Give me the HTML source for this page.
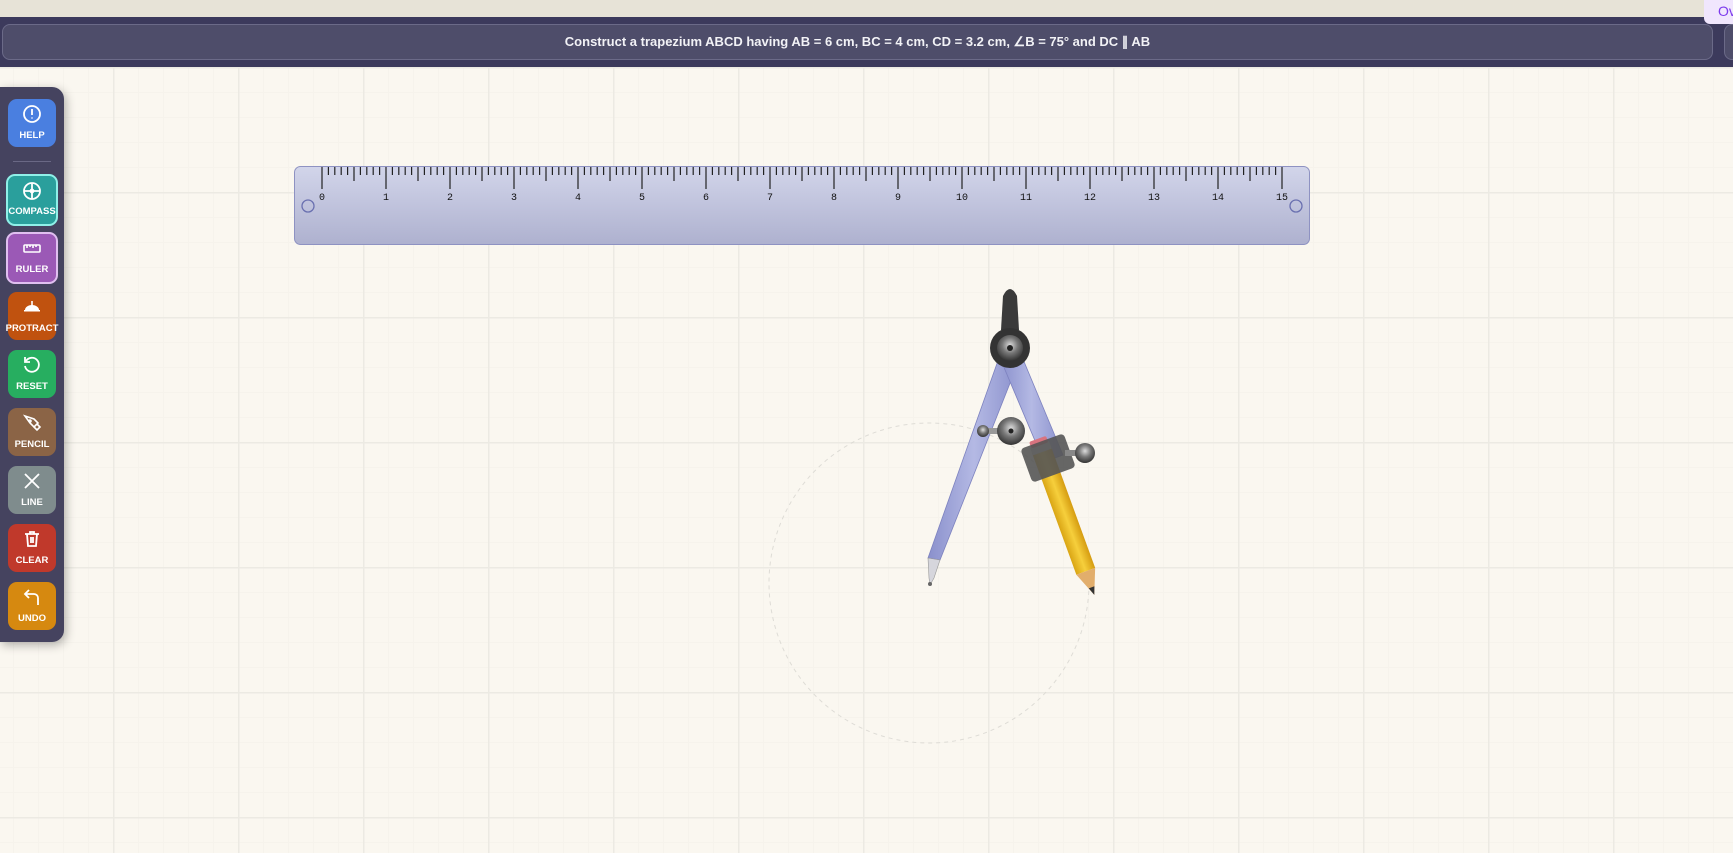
<!DOCTYPE html>
<html><head><meta charset="utf-8"><style>
*{margin:0;padding:0;box-sizing:border-box}
body{width:1733px;height:853px;overflow:hidden;font-family:"Liberation Sans",sans-serif;background:#faf7f0;position:relative}
.top{position:absolute;left:0;top:0;width:1733px;height:17px;background:#e7e3d7}
.badge{position:absolute;left:1704px;top:0;width:40px;height:24px;background:#f0e6fd;border-radius:0 0 0 6px;color:#7c3aed;font-size:14px;padding:3px 0 0 14px}
.bar{position:absolute;left:0;top:17px;width:1733px;height:50px;background:#3c3a5c}
.prompt{position:absolute;left:2px;top:24px;width:1711px;height:36px;background:#4e4d6a;border:1px solid #6b6a88;border-radius:8px;color:#f2f2f6;font-weight:bold;font-size:13px;text-align:center;line-height:34px}
.prompt2{position:absolute;left:1724px;top:24px;width:30px;height:36px;background:#4e4d6a;border:1px solid #6b6a88;border-radius:8px}
.canvas{position:absolute;left:0;top:67px;width:1733px;height:786px;
background-image:linear-gradient(#eceae3 1.5px,transparent 1.5px),linear-gradient(90deg,#eceae3 1.5px,transparent 1.5px),linear-gradient(#f6f3ec 1px,transparent 1px),linear-gradient(90deg,#f6f3ec 1px,transparent 1px);
background-size:125px 125px,125px 125px,25px 25px,25px 25px;background-position:113px 0,113px 0,13px 0,13px 0}
.side{position:absolute;left:0;top:87px;width:64px;height:555px;background:#45435f;border-radius:0 12px 12px 0;box-shadow:2px 3px 10px rgba(0,0,0,.3)}
.btn{position:absolute;left:8px;width:48px;height:48px;border-radius:9px;color:#fff;font-weight:bold;font-size:9.5px;text-align:center}
.btn svg{position:absolute;left:14px;top:5px}
.btn span{position:absolute;left:-6px;right:-6px;top:31px}
.sep{position:absolute;left:13px;top:74px;width:38px;height:1px;background:#6a6885}
</style></head><body>
<div class="top"></div>
<div class="bar"></div>
<div class="badge">Ov</div>
<div class="prompt">Construct a trapezium ABCD having AB = 6 cm, BC = 4 cm, CD = 3.2 cm, ∠B = 75° and DC ∥ AB</div>
<div class="prompt2"></div>
<div class="canvas"></div>
<div class="side">
<div class="btn" style="top:12px;background:#4a7fe0"><svg width="20" height="20" viewBox="0 0 20 20" fill="none" stroke="#fff" stroke-width="1.8"><circle cx="10" cy="10" r="8"/><path d="M10 5v6M10 13.5v1"/></svg><span>HELP</span></div>
<div class="sep"></div>
<div class="btn" style="top:87px;left:6px;width:52px;height:52px;background:#2a9f9c;border:2px solid #8ff0e8"><svg width="20" height="20" viewBox="0 0 20 20" fill="none" stroke="#fff" stroke-width="1.8" style="left:14px"><circle cx="10" cy="10" r="8"/><path d="M10 2v16M2 10h16"/><circle cx="10" cy="10" r="1.5" fill="#fff"/></svg><span style="top:30px">COMPASS</span></div>
<div class="btn" style="top:145px;left:6px;width:52px;height:52px;background:#9b59b6;border:2px solid #e0bff0"><svg width="20" height="20" viewBox="0 0 20 20" fill="none" stroke="#fff" stroke-width="1.6" style="left:14px"><rect x="2" y="6" width="16" height="7" rx="1"/><path d="M5 6v3M8 6v2M11 6v3M14 6v2"/></svg><span style="top:30px">RULER</span></div>
<div class="btn" style="top:205px;background:#c0520f"><svg width="20" height="20" viewBox="0 0 20 20" fill="#fff"><path d="M3 13a7 5 0 0 1 14 0z"/><rect x="9.2" y="4" width="1.6" height="9"/><rect x="2" y="13" width="16" height="1.5"/></svg><span>PROTRACT</span></div>
<div class="btn" style="top:263px;background:#27ae60"><svg width="20" height="20" viewBox="0 0 20 20" fill="none" stroke="#fff" stroke-width="1.8"><path d="M4 6a7 7 0 1 1-1 5"/><path d="M3 2v5h5"/></svg><span>RESET</span></div>
<div class="btn" style="top:321px;background:#8b6446"><svg width="20" height="20" viewBox="0 0 20 20" fill="none" stroke="#fff" stroke-width="1.6"><path d="M3 3l9 3 4 4-4 4-4-4z"/><path d="M12 14l3 3 3-3-3-3"/><circle cx="8" cy="8" r="1"/></svg><span>PENCIL</span></div>
<div class="btn" style="top:379px;background:#7f8c8d"><svg width="20" height="20" viewBox="0 0 20 20" fill="none" stroke="#fff" stroke-width="1.8"><path d="M3 3l14 14M17 3L3 17"/></svg><span>LINE</span></div>
<div class="btn" style="top:437px;background:#c0392b"><svg width="20" height="20" viewBox="0 0 20 20" fill="none" stroke="#fff" stroke-width="1.8"><path d="M3 5h14M8 5V3h4v2M5 5l1 12h8l1-12M9 8v6M11 8v6"/></svg><span>CLEAR</span></div>
<div class="btn" style="top:495px;background:#d68910"><svg width="20" height="20" viewBox="0 0 20 20" fill="none" stroke="#fff" stroke-width="1.8"><path d="M7 3L3 7l4 4"/><path d="M3 7h9a4 4 0 0 1 4 4v7"/></svg><span>UNDO</span></div>
</div>
<svg style="position:absolute;left:0;top:0" width="1733" height="853">
<defs>
<linearGradient id="rg" x1="0" y1="0" x2="0" y2="1"><stop offset="0" stop-color="#d2d5ea"/><stop offset="1" stop-color="#aeb1cf"/></linearGradient>
<linearGradient id="leg" x1="0" y1="0" x2="1" y2="0"><stop offset="0" stop-color="#8a90cc"/><stop offset=".5" stop-color="#b4b9e4"/><stop offset="1" stop-color="#8a90cc"/></linearGradient>
<linearGradient id="pen" x1="0" y1="0" x2="1" y2="0"><stop offset="0" stop-color="#d9a514"/><stop offset=".5" stop-color="#f6cf3c"/><stop offset="1" stop-color="#d59c10"/></linearGradient>
<radialGradient id="knob" cx=".5" cy=".4" r=".6"><stop offset="0" stop-color="#ddd"/><stop offset=".5" stop-color="#777"/><stop offset="1" stop-color="#333"/></radialGradient>
</defs>
<circle cx="929" cy="583" r="160" fill="none" stroke="#dedcd6" stroke-dasharray="4 4"/>
<rect x="294.5" y="166.5" width="1015" height="78" rx="6" fill="url(#rg)" stroke="#8e92c2"/>
<g id="ticks" stroke="#222" stroke-width="1.2"></g>
<g font-family="Liberation Mono, monospace" font-size="10" fill="#111" text-anchor="middle" id="nums"></g>
<g fill="none" stroke="#6a70b0" stroke-width="1.3"><circle cx="308" cy="206" r="6"/><circle cx="1296" cy="206" r="6"/></g>
<g>
<path d="M1000 355 L1020 358 L940 560 L928 558 Z" fill="url(#leg)" stroke="#7d82bf" stroke-width=".8"/>
<path d="M928 558 L940 560 L934 578 L930 585 L929 578 Z" fill="#d6d6dc" stroke="#999" stroke-width=".6"/>
<circle cx="930" cy="584" r="2" fill="#666"/>
<path d="M1000 358 L1020 352 L1063 455 L1044 462 Z" fill="url(#leg)" stroke="#7d82bf" stroke-width=".8"/>
<g transform="rotate(-20 1066 520)">
<rect x="1057" y="445" width="20" height="130" fill="url(#pen)"/>
<path d="M1057 575 L1077 575 L1067 600 Z" fill="#e2ae6c"/>
<path d="M1064 592 L1070 592 L1067 600 Z" fill="#333"/>
<rect x="1057" y="440" width="20" height="8" fill="#d0d0d0"/>
<rect x="1058" y="434" width="18" height="7" fill="#d9737f" rx="2"/>
</g>
<g transform="rotate(-20 1048 458)"><rect x="1025" y="440" width="46" height="36" rx="4" fill="#555" opacity=".9"/></g>
<rect x="1065" y="450" width="16" height="6" fill="#888"/>
<circle cx="1085" cy="453" r="10" fill="url(#knob)"/>
<rect x="986" y="428" width="14" height="6" fill="#999"/>
<circle cx="983" cy="431" r="6" fill="url(#knob)"/>
<circle cx="1011" cy="431" r="14" fill="url(#knob)"/>
<circle cx="1011" cy="431" r="2.5" fill="#222"/>
<path d="M1001 330 L1003 296 Q1010 282 1017 296 L1019 330 Z" fill="#3a3a3a"/>
<circle cx="1010" cy="348" r="20" fill="#333"/>
<circle cx="1010" cy="348" r="13" fill="url(#knob)"/>
<circle cx="1010" cy="348" r="3" fill="#222"/>
</g>
</svg>
<script>
var t=document.getElementById('ticks'),n=document.getElementById('nums'),s='',u='';
for(var i=0;i<=150;i++){var x=322+i*6.4;var h=i%10==0?22:(i%5==0?14:8);s+='<line x1="'+x+'" y1="167" x2="'+x+'" y2="'+(167+h)+'"/>';if(i%10==0)u+='<text x="'+x+'" y="200">'+(i/10)+'</text>';}
t.innerHTML=s;n.innerHTML=u;
</script>
</body></html>
